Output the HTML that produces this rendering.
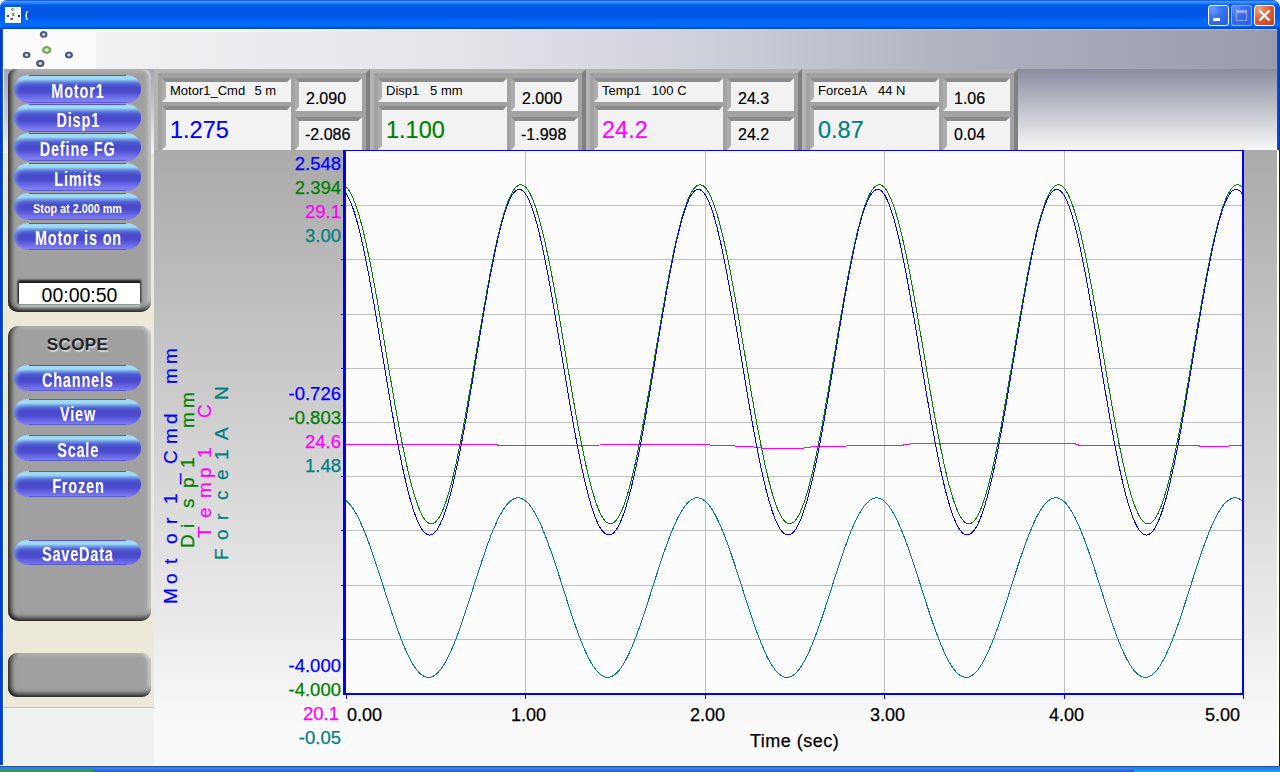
<!DOCTYPE html>
<html><head><meta charset="utf-8">
<style>
*{margin:0;padding:0;box-sizing:border-box}
html,body{width:1280px;height:772px;overflow:hidden;background:#fff;font-family:"Liberation Sans",sans-serif}
.a{position:absolute}
#title{left:0;top:0;width:1280px;height:29px;border-radius:7px 7px 0 0;
 background:linear-gradient(#0a4ed6 0px,#3d95ff 1.5px,#2c82fa 3px,#0060ee 5px,#0055e5 9px,#0057e8 17px,#0066f6 20px,#006cf8 26px,#0054dc 27.5px,#0040c4 29px)}
#lb{left:0;top:29px;width:3px;height:741px;background:linear-gradient(90deg,#0030b8,#0a5ae8)}
#rb{left:1277px;top:29px;width:3px;height:741px;background:linear-gradient(90deg,#0a5ae8,#0030b8)}
#bb{left:0;top:765px;width:1280px;height:5px;background:linear-gradient(#ffffff 0,#ffffff 1px,#2050a0 1px,#2050a0 2px,#3080e8 2px)}
#tb{left:0;top:770px;width:1280px;height:2px;background:#2a62d4}
#start{left:0;top:770px;width:93px;height:2px;background:#3c9a3c}
.wbtn{top:5px;width:21px;height:21px;border:1px solid #fff;border-radius:3px}
#client{left:3px;top:29px;width:1274px;height:736px;background:#ece9d8;overflow:hidden}
.c{position:absolute}
/* left panel */
.panel{position:absolute;background:#a0a0a0;border-radius:10px;
 box-shadow:inset 6px 0 5px -3px rgba(0,0,0,.75), inset 0 -6px 5px -3px rgba(0,0,0,.8), inset -5px 0 5px -3px rgba(255,255,255,.7), inset 0 5px 4px -3px rgba(255,255,255,.3)}
.btn{position:absolute;left:6px;width:127px;border-radius:15px/14px;
 background:linear-gradient(#8cc8f0 0,#9cd8f2 1px,#a0dcf4 4px,#74a4e6 6px,#5060d4 9px,#4848c8 13px,#4c4cd0 17px,#6a6ae6 22px,#8080f2 26px,#7070e8 28px);
 box-shadow:inset 3px 3px 4px -1px rgba(170,225,250,.45);
 color:#fff;font-weight:bold;font-size:20px;text-align:center;white-space:nowrap;overflow:hidden;padding-top:2px}
.btn:before{content:"";position:absolute;left:15px;right:15px;top:0;height:1px;background:#5454d4}
.btn:after{content:"";position:absolute;left:15px;right:15px;bottom:0;height:1px;background:#5a5ad0}
.btn span{display:inline-block;letter-spacing:1.2px;margin-right:-1.2px;transform:scaleX(.72);transform-origin:center}
/* stats */
.sp{position:absolute;top:40px;width:216px;height:81px;background:#a2a2a2;border-top:4px solid #b4b4b4;border-left:4px solid #b4b4b4;border-right:4px solid #808080}
.bx{position:absolute;-webkit-text-stroke:.2px currentColor;background:#f2f2f2;border-top:4px solid #8c8c8c;border-left:4px solid #adadad;border-right:4px solid #f2f2f2;border-bottom:4px solid #f2f2f2;white-space:nowrap;color:#000}
.ax{position:absolute;font-size:18.5px;text-align:right;width:80px;line-height:18px;margin-left:1px;margin-top:-0.5px;-webkit-text-stroke:.25px currentColor}
.xl{position:absolute;font-size:18px;line-height:18px;color:#000;-webkit-text-stroke:.25px currentColor}
</style></head><body>
<div id="title" class="a">
 <div class="a" style="left:5px;top:7px;width:16px;height:16px;background:#fff">
  <svg width="16" height="16" style="position:absolute;left:0;top:0">
   <path d="M7.5 1.2 L8.8 2.5 L7.5 3.8 L6.2 2.5 Z" fill="none" stroke="#3a4060" stroke-width="0.9"/>
   <rect x="7.3" y="6" width="2" height="3" fill="#58a030"/>
   <rect x="2" y="8" width="2" height="2" fill="#404868"/>
   <rect x="13" y="8" width="2" height="2" fill="#303860"/>
   <rect x="5.5" y="11" width="2.5" height="1.8" fill="#404868"/>
  </svg>
 </div>
 <div class="a" style="left:25px;top:9px;font-size:9.5px;line-height:12px;font-weight:bold;color:#fff;text-shadow:1px 0 #0a1870">(</div>
 <div class="a wbtn" style="left:1208px;background:radial-gradient(circle at 20% 15%,#6a9cff 0,#3a74f4 40%,#2456e0 100%)"><div class="a" style="left:4px;top:12px;width:7px;height:3px;background:#fff"></div></div>
 <div class="a wbtn" style="left:1231px;border-color:rgba(255,255,255,.45);background:radial-gradient(circle at 20% 15%,#5a8cf8 0,#3a6ef0 40%,#2a5ce6 100%)"><div class="a" style="left:4px;top:4px;width:11px;height:11px;border:1px solid rgba(200,210,255,.6);border-top-width:3px"></div></div>
 <div class="a wbtn" style="left:1254px;background:radial-gradient(circle at 20% 15%,#f0a080 0,#e2603a 45%,#c83c14 100%)">
  <svg width="19" height="19" style="position:absolute;left:0;top:0"><path d="M4.5 4.5 L14.5 14.5 M14.5 4.5 L4.5 14.5" stroke="#fff" stroke-width="2.2"/></svg>
 </div>
</div>
<div id="lb" class="a"></div><div id="rb" class="a"></div><div id="bb" class="a"></div><div id="tb" class="a"></div><div id="start" class="a"></div><div class="a" style="left:1134px;top:770px;width:146px;height:2px;background:#18a0ee"></div><div class="a" style="left:1277px;top:150px;width:2px;height:616px;background:#fffff2"></div><div class="a" style="left:1279px;top:150px;width:1px;height:616px;background:#0010a0"></div>

<div id="client" class="a">
 <!-- left column background -->
 <div class="c" style="left:0;top:0;width:1px;height:736px;background:#fff"></div>
 <div class="c" style="left:1px;top:40px;width:151px;height:84px;background:linear-gradient(#aaa2b6,#d4d0dc 60%,#f4f3f6)"></div>
 <div class="c" style="left:1px;top:678px;width:151px;height:1px;background:#c8c4b0"></div>
 <div class="c" style="left:1px;top:679px;width:151px;height:57px;background:#eff0f0"></div>
 <!-- logo -->
 <div class="c" style="left:0;top:0;width:93px;height:40px;background:#fbfbfb">
  <svg width="93" height="40" style="position:absolute;left:0;top:0">
   <defs>
    <radialGradient id="gd"><stop offset="0" stop-color="#f0f0f4"/><stop offset=".3" stop-color="#c8c8d4"/><stop offset=".55" stop-color="#4e5878"/><stop offset=".85" stop-color="#4e5878"/><stop offset="1" stop-color="#7a84a0"/></radialGradient>
    <radialGradient id="gg"><stop offset="0" stop-color="#f0f4ec"/><stop offset=".35" stop-color="#c8dcc0"/><stop offset=".6" stop-color="#74aa4c"/><stop offset=".88" stop-color="#74aa4c"/><stop offset="1" stop-color="#a0c888"/></radialGradient>
   </defs>
   <ellipse cx="40.7" cy="5.4" rx="3.9" ry="3.4" fill="url(#gd)"/>
   <ellipse cx="23.6" cy="26" rx="4" ry="3.3" fill="url(#gd)"/>
   <ellipse cx="65.9" cy="26" rx="4.1" ry="3.4" fill="url(#gd)"/>
   <ellipse cx="37.3" cy="34.4" rx="4.3" ry="3.6" fill="url(#gd)"/>
   <ellipse cx="43.7" cy="21" rx="4.8" ry="4" fill="url(#gg)"/>
  </svg>
 </div>
 <!-- top strip -->
 <div class="c" style="left:93px;top:0;width:1181px;height:40px;background:linear-gradient(90deg,#f2f2f4 0%,#e4e4ea 30%,#d0d2db 50%,#adb0bd 75%,#999cae 100%)"></div>
 <div class="c" style="left:93px;top:0;width:1181px;height:1px;background:rgba(255,255,255,.3)"></div>
 <div class="c" style="left:93px;top:1px;width:300px;height:2px;background:linear-gradient(90deg,#f8f9fa 0%,#f8f9fa 40%,rgba(248,249,250,0) 100%)"></div>
 <div class="c" style="left:93px;top:0;width:300px;height:1px;background:linear-gradient(90deg,#fff 0%,#fff 40%,rgba(255,255,255,0) 100%)"></div>
 <!-- stats row right bg -->
 <div class="c" style="left:1015px;top:40px;width:259px;height:81px;background:linear-gradient(#8a8ea0,#f8f8fa)"></div>
 <div class="c" style="left:148px;top:40px;width:4px;height:81px;background:linear-gradient(#aaa2b6,#d4d0dc 60%,#f4f3f6)"></div>
 <!-- chart bg -->
 <div class="c" style="left:151px;top:121px;width:1123px;height:615px;background:linear-gradient(#aaaaaa 0%,#d4d4d4 50%,#fafafa 95%)"></div>

 <!-- left panel 1 -->
 <div class="panel" style="left:5px;top:40px;width:143px;height:243px;border-radius:8px 8px 10px 10px">
  <div class="btn" style="top:6px;height:28px;line-height:28px"><span>Motor1</span></div>
  <div class="btn" style="top:35px;height:28px;line-height:28px"><span>Disp1</span></div>
  <div class="btn" style="top:64px;height:28px;line-height:28px"><span>Define FG</span></div>
  <div class="btn" style="top:94px;height:28px;line-height:28px"><span>Limits</span></div>
  <div class="btn" style="top:124px;height:27px;line-height:27px;font-size:13px"><span style="transform:scaleX(.83);letter-spacing:0;margin-right:0">Stop at 2.000 mm</span></div>
  <div class="btn" style="top:154px;height:27px;line-height:27px"><span>Motor is on</span></div>
  <div class="c" style="left:11px;top:214px;width:121px;height:21px;background:#fff;box-shadow:0 -2px 2px 1px #1a1a1a, -1px 0 2px #404040, 0 3px 3px rgba(230,230,230,.7);font-size:19.5px;line-height:21px;text-align:center;color:#000;padding-top:2px">00:00:50</div>
 </div>
 <!-- scope panel -->
 <div class="panel" style="left:5px;top:297px;width:143px;height:295px">
  <div class="c" style="left:0;top:10px;width:139px;line-height:17px;text-align:center;font-weight:bold;font-size:17px;color:#262626;letter-spacing:.4px;text-shadow:1px 1.5px 1px rgba(255,255,255,.55)">SCOPE</div>
  <div class="btn" style="top:39px;height:26px;line-height:26px"><span>Channels</span></div>
  <div class="btn" style="top:73px;height:26px;line-height:26px"><span>View</span></div>
  <div class="btn" style="top:109px;height:26px;line-height:26px"><span>Scale</span></div>
  <div class="btn" style="top:145px;height:26px;line-height:26px"><span>Frozen</span></div>
  <div class="btn" style="top:214px;height:25px;line-height:25px"><span>SaveData</span></div>
 </div>
 <div class="panel" style="left:5px;top:624px;width:143px;height:44px;border-radius:9px"></div>

 <!-- stats panels -->
 <div class="sp" style="left:151px">
  <div class="bx" style="left:4px;top:5px;width:129px;height:24px;font-size:13px;line-height:16px;padding-left:4px;padding-top:1px;-webkit-text-stroke:0">Motor1_Cmd&nbsp;&nbsp;<span style="margin-left:2px">5 m</span></div>
  <div class="bx" style="left:4px;top:33px;width:129px;height:44px;font-size:23.5px;line-height:26px;padding-left:4px;padding-top:7px;color:#0000ff">1.275</div>
  <div class="bx" style="left:137px;top:5px;width:67px;height:33px;font-size:16px;line-height:18px;padding-left:7px;padding-top:8px">2.090</div>
  <div class="bx" style="left:137px;top:44px;width:67px;height:33px;font-size:16px;line-height:18px;padding-left:6px;padding-top:5px">-2.086</div>
 </div>
 <div class="sp" style="left:367px">
  <div class="bx" style="left:4px;top:5px;width:129px;height:24px;font-size:13px;line-height:16px;padding-left:4px;padding-top:1px;-webkit-text-stroke:0">Disp1&nbsp;&nbsp;&nbsp;5 mm</div>
  <div class="bx" style="left:4px;top:33px;width:129px;height:44px;font-size:23.5px;line-height:26px;padding-left:4px;padding-top:7px;color:#008000">1.100</div>
  <div class="bx" style="left:137px;top:5px;width:67px;height:33px;font-size:16px;line-height:18px;padding-left:7px;padding-top:8px">2.000</div>
  <div class="bx" style="left:137px;top:44px;width:67px;height:33px;font-size:16px;line-height:18px;padding-left:6px;padding-top:5px">-1.998</div>
 </div>
 <div class="sp" style="left:583px">
  <div class="bx" style="left:4px;top:5px;width:129px;height:24px;font-size:13px;line-height:16px;padding-left:4px;padding-top:1px;-webkit-text-stroke:0">Temp1&nbsp;&nbsp;&nbsp;100 C</div>
  <div class="bx" style="left:4px;top:33px;width:129px;height:44px;font-size:23.5px;line-height:26px;padding-left:4px;padding-top:7px;color:#ff00ff">24.2</div>
  <div class="bx" style="left:137px;top:5px;width:67px;height:33px;font-size:16px;line-height:18px;padding-left:7px;padding-top:8px">24.3</div>
  <div class="bx" style="left:137px;top:44px;width:67px;height:33px;font-size:16px;line-height:18px;padding-left:7px;padding-top:5px">24.2</div>
 </div>
 <div class="sp" style="left:799px">
  <div class="bx" style="left:4px;top:5px;width:129px;height:24px;font-size:13px;line-height:16px;padding-left:4px;padding-top:1px;-webkit-text-stroke:0">Force1A&nbsp;&nbsp;&nbsp;44 N</div>
  <div class="bx" style="left:4px;top:33px;width:129px;height:44px;font-size:23.5px;line-height:26px;padding-left:4px;padding-top:7px;color:#008080">0.87</div>
  <div class="bx" style="left:137px;top:5px;width:67px;height:33px;font-size:16px;line-height:18px;padding-left:7px;padding-top:8px">1.06</div>
  <div class="bx" style="left:137px;top:44px;width:67px;height:33px;font-size:16px;line-height:18px;padding-left:7px;padding-top:5px">0.04</div>
 </div>
 <!-- chart bg cover for y>=150 over stats -->
 <div class="c" style="left:151px;top:121px;width:1123px;height:615px;background:linear-gradient(#aaaaaa 0%,#d4d4d4 50%,#fafafa 95%)"></div>
</div>

<!-- chart svg in page coords -->
<svg class="a" style="left:0;top:0" width="1280" height="772">
 <rect x="346" y="151" width="896" height="542" fill="#fcfcfc"/>
 <g stroke="#c0c0c0" stroke-width="1" shape-rendering="crispEdges"><line x1="346" y1="205.5" x2="1242" y2="205.5"/><line x1="346" y1="259.5" x2="1242" y2="259.5"/><line x1="346" y1="314.5" x2="1242" y2="314.5"/><line x1="346" y1="368.5" x2="1242" y2="368.5"/><line x1="346" y1="422.5" x2="1242" y2="422.5"/><line x1="346" y1="476.5" x2="1242" y2="476.5"/><line x1="346" y1="530.5" x2="1242" y2="530.5"/><line x1="346" y1="585.5" x2="1242" y2="585.5"/><line x1="346" y1="639.5" x2="1242" y2="639.5"/><line x1="525.5" y1="151" x2="525.5" y2="693"/><line x1="705.5" y1="151" x2="705.5" y2="693"/><line x1="884.5" y1="151" x2="884.5" y2="693"/><line x1="1064.5" y1="151" x2="1064.5" y2="693"/></g>
 <g stroke="#0000ff" stroke-width="1" shape-rendering="crispEdges"><line x1="341" y1="205.5" x2="343" y2="205.5"/><line x1="341" y1="259.5" x2="343" y2="259.5"/><line x1="341" y1="314.5" x2="343" y2="314.5"/><line x1="341" y1="368.5" x2="343" y2="368.5"/><line x1="341" y1="422.5" x2="343" y2="422.5"/><line x1="341" y1="476.5" x2="343" y2="476.5"/><line x1="341" y1="530.5" x2="343" y2="530.5"/><line x1="341" y1="585.5" x2="343" y2="585.5"/><line x1="341" y1="639.5" x2="343" y2="639.5"/><line x1="346.5" y1="695" x2="346.5" y2="699"/><line x1="525.5" y1="695" x2="525.5" y2="699"/><line x1="705.5" y1="695" x2="705.5" y2="699"/><line x1="884.5" y1="695" x2="884.5" y2="699"/><line x1="1064.5" y1="695" x2="1064.5" y2="699"/><line x1="1243.5" y1="695" x2="1243.5" y2="699"/></g>
 <polyline points="346,444.5 497,444.5 497,445.5 540,445.5 560,445.5 640,444.5 700,444.5 720,445.5 750,446.5 765,448.5 800,448.5 815,446.5 880,445.5 900,445.5 914,443.5 1074,443.5 1080,445.5 1199,445.5 1200,446.5 1228,446.5 1230,445.5 1242,445.5" fill="none" stroke="#ff00ff" stroke-width="1" shape-rendering="crispEdges"/>
 <polyline points="346,500.6 347,501.4 348,502.4 349,503.4 350,504.6 351,505.8 352,507.2 353,508.6 354,510.1 355,511.8 356,513.5 357,515.3 358,517.2 359,519.2 360,521.3 361,523.5 362,525.7 363,528.0 364,530.4 365,532.9 366,535.4 367,538.0 368,540.7 369,543.4 370,546.1 371,548.9 372,551.8 373,554.7 374,557.7 375,560.6 376,563.7 377,566.7 378,569.8 379,572.9 380,576.0 381,579.1 382,582.3 383,585.4 384,588.5 385,591.7 386,594.8 387,598.0 388,601.1 389,604.2 390,607.3 391,610.3 392,613.4 393,616.3 394,619.3 395,622.2 396,625.1 397,628.0 398,630.7 399,633.5 400,636.1 401,638.8 402,641.3 403,643.8 404,646.2 405,648.6 406,650.8 407,653.0 408,655.1 409,657.2 410,659.1 411,661.0 412,662.7 413,664.4 414,666.0 415,667.5 416,668.9 417,670.2 418,671.3 419,672.4 420,673.4 421,674.3 422,675.0 423,675.7 424,676.2 425,676.7 426,677.0 427,677.2 428,677.3 429,677.3 430,677.2 431,677.0 432,676.7 433,676.2 434,675.7 435,675.0 436,674.3 437,673.4 438,672.4 439,671.3 440,670.2 441,668.9 442,667.5 443,666.0 444,664.4 445,662.7 446,661.0 447,659.1 448,657.2 449,655.1 450,653.0 451,650.8 452,648.6 453,646.2 454,643.8 455,641.3 456,638.8 457,636.1 458,633.5 459,630.7 460,628.0 461,625.1 462,622.2 463,619.3 464,616.3 465,613.4 466,610.3 467,607.3 468,604.2 469,601.1 470,598.0 471,594.8 472,591.7 473,588.5 474,585.4 475,582.3 476,579.1 477,576.0 478,572.9 479,569.8 480,566.7 481,563.7 482,560.6 483,557.7 484,554.7 485,551.8 486,548.9 487,546.1 488,543.4 489,540.7 490,538.0 491,535.4 492,532.9 493,530.4 494,528.0 495,525.7 496,523.5 497,521.3 498,519.2 499,517.2 500,515.3 501,513.5 502,511.8 503,510.1 504,508.6 505,507.2 506,505.8 507,504.6 508,503.4 509,502.4 510,501.4 511,500.6 512,499.9 513,499.3 514,498.8 515,498.4 516,498.1 517,497.9 518,497.9 519,497.9 520,498.0 521,498.3 522,498.7 523,499.2 524,499.8 525,500.5 526,501.3 527,502.2 528,503.2 529,504.3 530,505.5 531,506.9 532,508.3 533,509.8 534,511.4 535,513.2 536,515.0 537,516.8 538,518.8 539,520.9 540,523.0 541,525.3 542,527.6 543,529.9 544,532.4 545,534.9 546,537.5 547,540.1 548,542.8 549,545.6 550,548.4 551,551.2 552,554.1 553,557.1 554,560.0 555,563.1 556,566.1 557,569.2 558,572.3 559,575.4 560,578.5 561,581.6 562,584.8 563,587.9 564,591.1 565,594.2 566,597.3 567,600.5 568,603.6 569,606.6 570,609.7 571,612.7 572,615.8 573,618.7 574,621.7 575,624.5 576,627.4 577,630.2 578,632.9 579,635.6 580,638.2 581,640.8 582,643.3 583,645.7 584,648.1 585,650.4 586,652.6 587,654.7 588,656.8 589,658.7 590,660.6 591,662.4 592,664.1 593,665.7 594,667.2 595,668.6 596,669.9 597,671.1 598,672.2 599,673.2 600,674.1 601,674.9 602,675.6 603,676.1 604,676.6 605,676.9 606,677.2 607,677.3 608,677.3 609,677.3 610,677.1 611,676.7 612,676.3 613,675.8 614,675.2 615,674.4 616,673.6 617,672.6 618,671.6 619,670.4 620,669.1 621,667.8 622,666.3 623,664.7 624,663.1 625,661.3 626,659.5 627,657.6 628,655.6 629,653.5 630,651.3 631,649.0 632,646.7 633,644.3 634,641.8 635,639.3 636,636.7 637,634.0 638,631.3 639,628.5 640,625.7 641,622.8 642,619.9 643,616.9 644,614.0 645,610.9 646,607.9 647,604.8 648,601.7 649,598.6 650,595.5 651,592.3 652,589.2 653,586.0 654,582.9 655,579.7 656,576.6 657,573.5 658,570.4 659,567.3 660,564.3 661,561.2 662,558.3 663,555.3 664,552.4 665,549.5 666,546.7 667,543.9 668,541.2 669,538.5 670,535.9 671,533.4 672,530.9 673,528.5 674,526.2 675,523.9 676,521.7 677,519.6 678,517.6 679,515.7 680,513.9 681,512.1 682,510.5 683,508.9 684,507.4 685,506.1 686,504.8 687,503.6 688,502.6 689,501.6 690,500.8 691,500.0 692,499.4 693,498.9 694,498.5 695,498.1 696,497.9 697,497.9 698,497.9 699,498.0 700,498.3 701,498.6 702,499.1 703,499.6 704,500.3 705,501.1 706,502.0 707,503.0 708,504.1 709,505.3 710,506.6 711,508.0 712,509.5 713,511.1 714,512.8 715,514.6 716,516.5 717,518.4 718,520.5 719,522.6 720,524.8 721,527.1 722,529.5 723,531.9 724,534.4 725,537.0 726,539.6 727,542.3 728,545.0 729,547.8 730,550.7 731,553.5 732,556.5 733,559.4 734,562.5 735,565.5 736,568.6 737,571.6 738,574.7 739,577.9 740,581.0 741,584.1 742,587.3 743,590.4 744,593.6 745,596.7 746,599.8 747,602.9 748,606.0 749,609.1 750,612.1 751,615.2 752,618.1 753,621.1 754,624.0 755,626.8 756,629.6 757,632.4 758,635.1 759,637.7 760,640.3 761,642.8 762,645.3 763,647.6 764,649.9 765,652.2 766,654.3 767,656.4 768,658.4 769,660.2 770,662.0 771,663.8 772,665.4 773,666.9 774,668.3 775,669.7 776,670.9 777,672.0 778,673.0 779,673.9 780,674.7 781,675.4 782,676.0 783,676.5 784,676.9 785,677.2 786,677.3 787,677.3 788,677.3 789,677.1 790,676.8 791,676.4 792,675.9 793,675.3 794,674.6 795,673.8 796,672.8 797,671.8 798,670.6 799,669.4 800,668.0 801,666.6 802,665.1 803,663.4 804,661.7 805,659.9 806,658.0 807,656.0 808,653.9 809,651.7 810,649.5 811,647.2 812,644.8 813,642.3 814,639.8 815,637.2 816,634.5 817,631.8 818,629.1 819,626.3 820,623.4 821,620.5 822,617.5 823,614.6 824,611.5 825,608.5 826,605.4 827,602.3 828,599.2 829,596.1 830,592.9 831,589.8 832,586.7 833,583.5 834,580.4 835,577.2 836,574.1 837,571.0 838,567.9 839,564.9 840,561.8 841,558.9 842,555.9 843,553.0 844,550.1 845,547.2 846,544.5 847,541.7 848,539.1 849,536.4 850,533.9 851,531.4 852,529.0 853,526.6 854,524.4 855,522.2 856,520.1 857,518.0 858,516.1 859,514.2 860,512.5 861,510.8 862,509.2 863,507.7 864,506.3 865,505.0 866,503.9 867,502.8 868,501.8 869,500.9 870,500.2 871,499.5 872,499.0 873,498.5 874,498.2 875,498.0 876,497.9 877,497.9 878,498.0 879,498.2 880,498.5 881,499.0 882,499.5 883,500.2 884,500.9 885,501.8 886,502.8 887,503.9 888,505.0 889,506.3 890,507.7 891,509.2 892,510.8 893,512.5 894,514.2 895,516.1 896,518.0 897,520.1 898,522.2 899,524.4 900,526.6 901,529.0 902,531.4 903,533.9 904,536.4 905,539.1 906,541.7 907,544.5 908,547.2 909,550.1 910,553.0 911,555.9 912,558.9 913,561.8 914,564.9 915,567.9 916,571.0 917,574.1 918,577.2 919,580.4 920,583.5 921,586.7 922,589.8 923,592.9 924,596.1 925,599.2 926,602.3 927,605.4 928,608.5 929,611.5 930,614.6 931,617.5 932,620.5 933,623.4 934,626.3 935,629.1 936,631.8 937,634.5 938,637.2 939,639.8 940,642.3 941,644.8 942,647.2 943,649.5 944,651.7 945,653.9 946,656.0 947,658.0 948,659.9 949,661.7 950,663.4 951,665.1 952,666.6 953,668.0 954,669.4 955,670.6 956,671.8 957,672.8 958,673.8 959,674.6 960,675.3 961,675.9 962,676.4 963,676.8 964,677.1 965,677.3 966,677.3 967,677.3 968,677.2 969,676.9 970,676.5 971,676.0 972,675.4 973,674.7 974,673.9 975,673.0 976,672.0 977,670.9 978,669.7 979,668.3 980,666.9 981,665.4 982,663.8 983,662.0 984,660.2 985,658.4 986,656.4 987,654.3 988,652.2 989,649.9 990,647.6 991,645.3 992,642.8 993,640.3 994,637.7 995,635.1 996,632.4 997,629.6 998,626.8 999,624.0 1000,621.1 1001,618.1 1002,615.2 1003,612.1 1004,609.1 1005,606.0 1006,602.9 1007,599.8 1008,596.7 1009,593.6 1010,590.4 1011,587.3 1012,584.1 1013,581.0 1014,577.9 1015,574.7 1016,571.6 1017,568.6 1018,565.5 1019,562.5 1020,559.4 1021,556.5 1022,553.5 1023,550.7 1024,547.8 1025,545.0 1026,542.3 1027,539.6 1028,537.0 1029,534.4 1030,531.9 1031,529.5 1032,527.1 1033,524.8 1034,522.6 1035,520.5 1036,518.4 1037,516.5 1038,514.6 1039,512.8 1040,511.1 1041,509.5 1042,508.0 1043,506.6 1044,505.3 1045,504.1 1046,503.0 1047,502.0 1048,501.1 1049,500.3 1050,499.6 1051,499.1 1052,498.6 1053,498.3 1054,498.0 1055,497.9 1056,497.9 1057,497.9 1058,498.1 1059,498.5 1060,498.9 1061,499.4 1062,500.0 1063,500.8 1064,501.6 1065,502.6 1066,503.6 1067,504.8 1068,506.1 1069,507.4 1070,508.9 1071,510.5 1072,512.1 1073,513.9 1074,515.7 1075,517.6 1076,519.6 1077,521.7 1078,523.9 1079,526.2 1080,528.5 1081,530.9 1082,533.4 1083,535.9 1084,538.5 1085,541.2 1086,543.9 1087,546.7 1088,549.5 1089,552.4 1090,555.3 1091,558.3 1092,561.2 1093,564.3 1094,567.3 1095,570.4 1096,573.5 1097,576.6 1098,579.7 1099,582.9 1100,586.0 1101,589.2 1102,592.3 1103,595.5 1104,598.6 1105,601.7 1106,604.8 1107,607.9 1108,610.9 1109,614.0 1110,616.9 1111,619.9 1112,622.8 1113,625.7 1114,628.5 1115,631.3 1116,634.0 1117,636.7 1118,639.3 1119,641.8 1120,644.3 1121,646.7 1122,649.0 1123,651.3 1124,653.5 1125,655.6 1126,657.6 1127,659.5 1128,661.3 1129,663.1 1130,664.7 1131,666.3 1132,667.8 1133,669.1 1134,670.4 1135,671.6 1136,672.6 1137,673.6 1138,674.4 1139,675.2 1140,675.8 1141,676.3 1142,676.7 1143,677.1 1144,677.3 1145,677.3 1146,677.3 1147,677.2 1148,676.9 1149,676.6 1150,676.1 1151,675.6 1152,674.9 1153,674.1 1154,673.2 1155,672.2 1156,671.1 1157,669.9 1158,668.6 1159,667.2 1160,665.7 1161,664.1 1162,662.4 1163,660.6 1164,658.7 1165,656.8 1166,654.7 1167,652.6 1168,650.4 1169,648.1 1170,645.7 1171,643.3 1172,640.8 1173,638.2 1174,635.6 1175,632.9 1176,630.2 1177,627.4 1178,624.5 1179,621.7 1180,618.7 1181,615.8 1182,612.7 1183,609.7 1184,606.6 1185,603.6 1186,600.5 1187,597.3 1188,594.2 1189,591.1 1190,587.9 1191,584.8 1192,581.6 1193,578.5 1194,575.4 1195,572.3 1196,569.2 1197,566.1 1198,563.1 1199,560.0 1200,557.1 1201,554.1 1202,551.2 1203,548.4 1204,545.6 1205,542.8 1206,540.1 1207,537.5 1208,534.9 1209,532.4 1210,529.9 1211,527.6 1212,525.3 1213,523.0 1214,520.9 1215,518.8 1216,516.8 1217,515.0 1218,513.2 1219,511.4 1220,509.8 1221,508.3 1222,506.9 1223,505.5 1224,504.3 1225,503.2 1226,502.2 1227,501.3 1228,500.5 1229,499.8 1230,499.2 1231,498.7 1232,498.3 1233,498.0 1234,497.9 1235,497.9 1236,497.9 1237,498.1 1238,498.4 1239,498.8 1240,499.3 1241,499.9 1242,500.6" fill="none" stroke="#008080" stroke-width="1" shape-rendering="crispEdges"/>
 <polyline points="346,186.8 347,187.8 348,189.0 349,190.5 350,192.1 351,193.9 352,195.9 353,198.2 354,200.6 355,203.2 356,205.9 357,208.9 358,212.1 359,215.4 360,218.9 361,222.5 362,226.3 363,230.3 364,234.4 365,238.7 366,243.1 367,247.7 368,252.4 369,257.2 370,262.1 371,267.2 372,272.3 373,277.6 374,282.9 375,288.3 376,293.9 377,299.4 378,305.1 379,310.8 380,316.6 381,322.4 382,328.3 383,334.1 384,340.1 385,346.0 386,351.9 387,357.9 388,363.8 389,369.7 390,375.6 391,381.5 392,387.4 393,393.2 394,398.9 395,404.6 396,410.3 397,415.9 398,421.4 399,426.8 400,432.1 401,437.3 402,442.5 403,447.5 404,452.4 405,457.2 406,461.8 407,466.4 408,470.7 409,475.0 410,479.1 411,483.0 412,486.8 413,490.4 414,493.9 415,497.2 416,500.3 417,503.2 418,506.0 419,508.5 420,510.9 421,513.1 422,515.1 423,516.8 424,518.4 425,519.8 426,521.0 427,522.0 428,522.7 429,523.3 430,523.6 431,523.8 432,523.7 433,523.5 434,523.0 435,522.3 436,521.4 437,520.3 438,519.0 439,517.5 440,515.8 441,513.9 442,511.8 443,509.5 444,507.0 445,504.3 446,501.5 447,498.4 448,495.2 449,491.8 450,488.3 451,484.6 452,480.7 453,476.6 454,472.5 455,468.1 456,463.7 457,459.0 458,454.3 459,449.5 460,444.5 461,439.4 462,434.2 463,428.9 464,423.5 465,418.1 466,412.5 467,406.9 468,401.2 469,395.5 470,389.7 471,383.9 472,378.0 473,372.1 474,366.2 475,360.2 476,354.3 477,348.4 478,342.4 479,336.5 480,330.6 481,324.7 482,318.9 483,313.1 484,307.4 485,301.7 486,296.1 487,290.5 488,285.1 489,279.7 490,274.4 491,269.2 492,264.1 493,259.1 494,254.3 495,249.6 496,244.9 497,240.5 498,236.1 499,232.0 500,227.9 501,224.0 502,220.3 503,216.8 504,213.4 505,210.2 506,207.1 507,204.3 508,201.6 509,199.1 510,196.8 511,194.7 512,192.8 513,191.1 514,189.6 515,188.3 516,187.2 517,186.3 518,185.6 519,185.1 520,184.9 521,184.8 522,185.0 523,185.3 524,185.9 525,186.6 526,187.6 527,188.8 528,190.2 529,191.8 530,193.5 531,195.5 532,197.7 533,200.1 534,202.6 535,205.4 536,208.3 537,211.4 538,214.7 539,218.2 540,221.8 541,225.6 542,229.5 543,233.6 544,237.9 545,242.2 546,246.8 547,251.4 548,256.2 549,261.1 550,266.1 551,271.3 552,276.5 553,281.8 554,287.2 555,292.7 556,298.3 557,304.0 558,309.7 559,315.4 560,321.2 561,327.1 562,333.0 563,338.9 564,344.8 565,350.7 566,356.7 567,362.6 568,368.5 569,374.5 570,380.3 571,386.2 572,392.0 573,397.8 574,403.5 575,409.2 576,414.7 577,420.3 578,425.7 579,431.0 580,436.3 581,441.4 582,446.5 583,451.4 584,456.2 585,460.9 586,465.5 587,469.9 588,474.2 589,478.3 590,482.3 591,486.1 592,489.7 593,493.2 594,496.5 595,499.7 596,502.7 597,505.4 598,508.0 599,510.4 600,512.7 601,514.7 602,516.5 603,518.1 604,519.6 605,520.8 606,521.8 607,522.6 608,523.2 609,523.6 610,523.8 611,523.8 612,523.5 613,523.1 614,522.5 615,521.6 616,520.5 617,519.3 618,517.8 619,516.2 620,514.3 621,512.2 622,510.0 623,507.5 624,504.9 625,502.1 626,499.1 627,495.9 628,492.5 629,489.0 630,485.3 631,481.5 632,477.5 633,473.3 634,469.0 635,464.6 636,460.0 637,455.3 638,450.4 639,445.5 640,440.4 641,435.2 642,430.0 643,424.6 644,419.2 645,413.6 646,408.0 647,402.4 648,396.6 649,390.9 650,385.0 651,379.2 652,373.3 653,367.4 654,361.4 655,355.5 656,349.5 657,343.6 658,337.7 659,331.8 660,325.9 661,320.1 662,314.3 663,308.5 664,302.8 665,297.2 666,291.6 667,286.2 668,280.8 669,275.4 670,270.2 671,265.1 672,260.1 673,255.2 674,250.5 675,245.9 676,241.4 677,237.0 678,232.8 679,228.7 680,224.8 681,221.0 682,217.5 683,214.0 684,210.8 685,207.7 686,204.8 687,202.1 688,199.6 689,197.3 690,195.1 691,193.2 692,191.4 693,189.9 694,188.5 695,187.4 696,186.5 697,185.7 698,185.2 699,184.9 700,184.8 701,184.9 702,185.2 703,185.7 704,186.5 705,187.4 706,188.5 707,189.9 708,191.4 709,193.2 710,195.1 711,197.3 712,199.6 713,202.1 714,204.8 715,207.7 716,210.8 717,214.0 718,217.5 719,221.0 720,224.8 721,228.7 722,232.8 723,237.0 724,241.4 725,245.9 726,250.5 727,255.2 728,260.1 729,265.1 730,270.2 731,275.4 732,280.8 733,286.2 734,291.6 735,297.2 736,302.8 737,308.5 738,314.3 739,320.1 740,325.9 741,331.8 742,337.7 743,343.6 744,349.5 745,355.5 746,361.4 747,367.4 748,373.3 749,379.2 750,385.0 751,390.9 752,396.6 753,402.4 754,408.0 755,413.6 756,419.2 757,424.6 758,430.0 759,435.2 760,440.4 761,445.5 762,450.4 763,455.3 764,460.0 765,464.6 766,469.0 767,473.3 768,477.5 769,481.5 770,485.3 771,489.0 772,492.5 773,495.9 774,499.1 775,502.1 776,504.9 777,507.5 778,510.0 779,512.2 780,514.3 781,516.2 782,517.8 783,519.3 784,520.5 785,521.6 786,522.5 787,523.1 788,523.5 789,523.8 790,523.8 791,523.6 792,523.2 793,522.6 794,521.8 795,520.8 796,519.6 797,518.1 798,516.5 799,514.7 800,512.7 801,510.4 802,508.0 803,505.4 804,502.7 805,499.7 806,496.5 807,493.2 808,489.7 809,486.1 810,482.3 811,478.3 812,474.2 813,469.9 814,465.5 815,460.9 816,456.2 817,451.4 818,446.5 819,441.4 820,436.3 821,431.0 822,425.7 823,420.3 824,414.7 825,409.2 826,403.5 827,397.8 828,392.0 829,386.2 830,380.3 831,374.5 832,368.5 833,362.6 834,356.7 835,350.7 836,344.8 837,338.9 838,333.0 839,327.1 840,321.2 841,315.4 842,309.7 843,304.0 844,298.3 845,292.7 846,287.2 847,281.8 848,276.5 849,271.3 850,266.1 851,261.1 852,256.2 853,251.4 854,246.8 855,242.2 856,237.9 857,233.6 858,229.5 859,225.6 860,221.8 861,218.2 862,214.7 863,211.4 864,208.3 865,205.4 866,202.6 867,200.1 868,197.7 869,195.5 870,193.5 871,191.8 872,190.2 873,188.8 874,187.6 875,186.6 876,185.9 877,185.3 878,185.0 879,184.8 880,184.9 881,185.1 882,185.6 883,186.3 884,187.2 885,188.3 886,189.6 887,191.1 888,192.8 889,194.7 890,196.8 891,199.1 892,201.6 893,204.3 894,207.1 895,210.2 896,213.4 897,216.8 898,220.3 899,224.0 900,227.9 901,232.0 902,236.1 903,240.5 904,244.9 905,249.6 906,254.3 907,259.1 908,264.1 909,269.2 910,274.4 911,279.7 912,285.1 913,290.5 914,296.1 915,301.7 916,307.4 917,313.1 918,318.9 919,324.7 920,330.6 921,336.5 922,342.4 923,348.4 924,354.3 925,360.2 926,366.2 927,372.1 928,378.0 929,383.9 930,389.7 931,395.5 932,401.2 933,406.9 934,412.5 935,418.1 936,423.5 937,428.9 938,434.2 939,439.4 940,444.5 941,449.5 942,454.3 943,459.0 944,463.7 945,468.1 946,472.5 947,476.6 948,480.7 949,484.6 950,488.3 951,491.8 952,495.2 953,498.4 954,501.5 955,504.3 956,507.0 957,509.5 958,511.8 959,513.9 960,515.8 961,517.5 962,519.0 963,520.3 964,521.4 965,522.3 966,523.0 967,523.5 968,523.7 969,523.8 970,523.6 971,523.3 972,522.7 973,522.0 974,521.0 975,519.8 976,518.4 977,516.8 978,515.1 979,513.1 980,510.9 981,508.5 982,506.0 983,503.2 984,500.3 985,497.2 986,493.9 987,490.4 988,486.8 989,483.0 990,479.1 991,475.0 992,470.7 993,466.4 994,461.8 995,457.2 996,452.4 997,447.5 998,442.5 999,437.3 1000,432.1 1001,426.8 1002,421.4 1003,415.9 1004,410.3 1005,404.6 1006,398.9 1007,393.2 1008,387.4 1009,381.5 1010,375.6 1011,369.7 1012,363.8 1013,357.9 1014,351.9 1015,346.0 1016,340.1 1017,334.1 1018,328.3 1019,322.4 1020,316.6 1021,310.8 1022,305.1 1023,299.4 1024,293.9 1025,288.3 1026,282.9 1027,277.6 1028,272.3 1029,267.2 1030,262.1 1031,257.2 1032,252.4 1033,247.7 1034,243.1 1035,238.7 1036,234.4 1037,230.3 1038,226.3 1039,222.5 1040,218.9 1041,215.4 1042,212.1 1043,208.9 1044,205.9 1045,203.2 1046,200.6 1047,198.2 1048,195.9 1049,193.9 1050,192.1 1051,190.5 1052,189.0 1053,187.8 1054,186.8 1055,186.0 1056,185.4 1057,185.0 1058,184.8 1059,184.8 1060,185.1 1061,185.5 1062,186.1 1063,187.0 1064,188.1 1065,189.3 1066,190.8 1067,192.4 1068,194.3 1069,196.4 1070,198.6 1071,201.1 1072,203.7 1073,206.5 1074,209.5 1075,212.7 1076,216.1 1077,219.6 1078,223.3 1079,227.1 1080,231.1 1081,235.3 1082,239.6 1083,244.0 1084,248.6 1085,253.3 1086,258.2 1087,263.1 1088,268.2 1089,273.4 1090,278.6 1091,284.0 1092,289.4 1093,295.0 1094,300.6 1095,306.2 1096,312.0 1097,317.7 1098,323.6 1099,329.4 1100,335.3 1101,341.2 1102,347.2 1103,353.1 1104,359.1 1105,365.0 1106,370.9 1107,376.8 1108,382.7 1109,388.5 1110,394.3 1111,400.1 1112,405.8 1113,411.4 1114,417.0 1115,422.4 1116,427.8 1117,433.2 1118,438.4 1119,443.5 1120,448.5 1121,453.4 1122,458.1 1123,462.7 1124,467.2 1125,471.6 1126,475.8 1127,479.9 1128,483.8 1129,487.6 1130,491.1 1131,494.6 1132,497.8 1133,500.9 1134,503.8 1135,506.5 1136,509.0 1137,511.3 1138,513.5 1139,515.4 1140,517.2 1141,518.7 1142,520.1 1143,521.2 1144,522.1 1145,522.9 1146,523.4 1147,523.7 1148,523.8 1149,523.7 1150,523.4 1151,522.9 1152,522.1 1153,521.2 1154,520.1 1155,518.7 1156,517.2 1157,515.4 1158,513.5 1159,511.3 1160,509.0 1161,506.5 1162,503.8 1163,500.9 1164,497.8 1165,494.6 1166,491.1 1167,487.6 1168,483.8 1169,479.9 1170,475.8 1171,471.6 1172,467.2 1173,462.7 1174,458.1 1175,453.4 1176,448.5 1177,443.5 1178,438.4 1179,433.2 1180,427.8 1181,422.4 1182,417.0 1183,411.4 1184,405.8 1185,400.1 1186,394.3 1187,388.5 1188,382.7 1189,376.8 1190,370.9 1191,365.0 1192,359.1 1193,353.1 1194,347.2 1195,341.2 1196,335.3 1197,329.4 1198,323.6 1199,317.7 1200,312.0 1201,306.2 1202,300.6 1203,295.0 1204,289.4 1205,284.0 1206,278.6 1207,273.4 1208,268.2 1209,263.1 1210,258.2 1211,253.3 1212,248.6 1213,244.0 1214,239.6 1215,235.3 1216,231.1 1217,227.1 1218,223.3 1219,219.6 1220,216.1 1221,212.7 1222,209.5 1223,206.5 1224,203.7 1225,201.1 1226,198.6 1227,196.4 1228,194.3 1229,192.4 1230,190.8 1231,189.3 1232,188.1 1233,187.0 1234,186.1 1235,185.5 1236,185.1 1237,184.8 1238,184.8 1239,185.0 1240,185.4 1241,186.0 1242,186.8" fill="none" stroke="#008000" stroke-width="1" shape-rendering="crispEdges"/>
 <polyline points="346,193.5 347,195.0 348,196.7 349,198.6 350,200.7 351,203.1 352,205.6 353,208.4 354,211.4 355,214.5 356,217.9 357,221.4 358,225.1 359,229.0 360,233.1 361,237.3 362,241.7 363,246.3 364,250.9 365,255.8 366,260.7 367,265.8 368,271.0 369,276.3 370,281.8 371,287.3 372,292.9 373,298.6 374,304.3 375,310.2 376,316.0 377,322.0 378,327.9 379,334.0 380,340.0 381,346.1 382,352.1 383,358.2 384,364.3 385,370.3 386,376.4 387,382.4 388,388.4 389,394.3 390,400.2 391,406.0 392,411.8 393,417.5 394,423.2 395,428.7 396,434.2 397,439.6 398,444.8 399,450.0 400,455.1 401,460.0 402,464.8 403,469.5 404,474.1 405,478.5 406,482.8 407,487.0 408,491.0 409,494.8 410,498.5 411,502.0 412,505.4 413,508.6 414,511.6 415,514.5 416,517.2 417,519.6 418,522.0 419,524.1 420,526.0 421,527.8 422,529.4 423,530.8 424,531.9 425,532.9 426,533.7 427,534.3 428,534.7 429,535.0 430,535.0 431,534.8 432,534.4 433,533.9 434,533.1 435,532.2 436,531.0 437,529.7 438,528.1 439,526.4 440,524.5 441,522.4 442,520.1 443,517.7 444,515.0 445,512.2 446,509.2 447,506.1 448,502.7 449,499.2 450,495.6 451,491.8 452,487.8 453,483.7 454,479.4 455,475.0 456,470.5 457,465.8 458,461.0 459,456.1 460,451.0 461,445.9 462,440.6 463,435.3 464,429.8 465,424.3 466,418.7 467,413.0 468,407.2 469,401.4 470,395.5 471,389.5 472,383.6 473,377.6 474,371.5 475,365.5 476,359.4 477,353.3 478,347.3 479,341.2 480,335.2 481,329.1 482,323.2 483,317.2 484,311.3 485,305.5 486,299.7 487,294.0 488,288.4 489,282.9 490,277.4 491,272.1 492,266.9 493,261.7 494,256.8 495,251.9 496,247.2 497,242.6 498,238.2 499,233.9 500,229.8 501,225.9 502,222.1 503,218.6 504,215.2 505,212.0 506,209.0 507,206.2 508,203.6 509,201.2 510,199.0 511,197.1 512,195.3 513,193.8 514,192.5 515,191.4 516,190.6 517,190.0 518,189.6 519,189.4 520,189.5 521,189.8 522,190.3 523,191.1 524,192.0 525,193.2 526,194.7 527,196.3 528,198.2 529,200.3 530,202.6 531,205.1 532,207.8 533,210.8 534,213.9 535,217.2 536,220.7 537,224.4 538,228.2 539,232.3 540,236.5 541,240.8 542,245.3 543,250.0 544,254.8 545,259.7 546,264.8 547,270.0 548,275.3 549,280.7 550,286.2 551,291.8 552,297.4 553,303.2 554,309.0 555,314.9 556,320.8 557,326.7 558,332.8 559,338.8 560,344.8 561,350.9 562,357.0 563,363.0 564,369.1 565,375.2 566,381.2 567,387.2 568,393.1 569,399.0 570,404.9 571,410.7 572,416.4 573,422.0 574,427.6 575,433.1 576,438.5 577,443.8 578,449.0 579,454.1 580,459.0 581,463.9 582,468.6 583,473.2 584,477.7 585,482.0 586,486.2 587,490.2 588,494.1 589,497.8 590,501.3 591,504.7 592,508.0 593,511.0 594,513.9 595,516.6 596,519.2 597,521.5 598,523.7 599,525.7 600,527.5 601,529.1 602,530.5 603,531.7 604,532.7 605,533.6 606,534.2 607,534.7 608,534.9 609,535.0 610,534.9 611,534.5 612,534.0 613,533.3 614,532.4 615,531.2 616,529.9 617,528.5 618,526.8 619,524.9 620,522.8 621,520.6 622,518.2 623,515.6 624,512.8 625,509.8 626,506.7 627,503.4 628,499.9 629,496.3 630,492.5 631,488.6 632,484.5 633,480.3 634,475.9 635,471.4 636,466.7 637,462.0 638,457.1 639,452.0 640,446.9 641,441.7 642,436.3 643,430.9 644,425.4 645,419.8 646,414.1 647,408.3 648,402.5 649,396.7 650,390.7 651,384.8 652,378.8 653,372.7 654,366.7 655,360.6 656,354.5 657,348.5 658,342.4 659,336.4 660,330.3 661,324.4 662,318.4 663,312.5 664,306.7 665,300.9 666,295.1 667,289.5 668,284.0 669,278.5 670,273.1 671,267.9 672,262.8 673,257.7 674,252.9 675,248.1 676,243.5 677,239.1 678,234.8 679,230.6 680,226.7 681,222.9 682,219.3 683,215.8 684,212.6 685,209.6 686,206.7 687,204.1 688,201.7 689,199.4 690,197.4 691,195.6 692,194.1 693,192.7 694,191.6 695,190.7 696,190.1 697,189.6 698,189.4 699,189.4 700,189.7 701,190.2 702,190.9 703,191.8 704,193.0 705,194.4 706,196.0 707,197.8 708,199.9 709,202.1 710,204.6 711,207.3 712,210.2 713,213.2 714,216.5 715,220.0 716,223.6 717,227.4 718,231.4 719,235.6 720,239.9 721,244.4 722,249.1 723,253.8 724,258.7 725,263.8 726,268.9 727,274.2 728,279.6 729,285.1 730,290.6 731,296.3 732,302.0 733,307.8 734,313.7 735,319.6 736,325.6 737,331.5 738,337.6 739,343.6 740,349.7 741,355.8 742,361.8 743,367.9 744,373.9 745,380.0 746,386.0 747,391.9 748,397.8 749,403.7 750,409.5 751,415.2 752,420.9 753,426.5 754,432.0 755,437.4 756,442.7 757,448.0 758,453.1 759,458.1 760,462.9 761,467.7 762,472.3 763,476.8 764,481.1 765,485.3 766,489.4 767,493.3 768,497.1 769,500.7 770,504.1 771,507.3 772,510.4 773,513.4 774,516.1 775,518.7 776,521.1 777,523.3 778,525.3 779,527.1 780,528.8 781,530.2 782,531.5 783,532.6 784,533.4 785,534.1 786,534.6 787,534.9 788,535.0 789,534.9 790,534.6 791,534.1 792,533.4 793,532.6 794,531.5 795,530.2 796,528.8 797,527.1 798,525.3 799,523.3 800,521.1 801,518.7 802,516.1 803,513.4 804,510.4 805,507.3 806,504.1 807,500.7 808,497.1 809,493.3 810,489.4 811,485.3 812,481.1 813,476.8 814,472.3 815,467.7 816,462.9 817,458.1 818,453.1 819,448.0 820,442.7 821,437.4 822,432.0 823,426.5 824,420.9 825,415.2 826,409.5 827,403.7 828,397.8 829,391.9 830,386.0 831,380.0 832,373.9 833,367.9 834,361.8 835,355.8 836,349.7 837,343.6 838,337.6 839,331.5 840,325.6 841,319.6 842,313.7 843,307.8 844,302.0 845,296.3 846,290.6 847,285.1 848,279.6 849,274.2 850,268.9 851,263.8 852,258.7 853,253.8 854,249.1 855,244.4 856,239.9 857,235.6 858,231.4 859,227.4 860,223.6 861,220.0 862,216.5 863,213.2 864,210.2 865,207.3 866,204.6 867,202.1 868,199.9 869,197.8 870,196.0 871,194.4 872,193.0 873,191.8 874,190.9 875,190.2 876,189.7 877,189.4 878,189.4 879,189.6 880,190.1 881,190.7 882,191.6 883,192.7 884,194.1 885,195.6 886,197.4 887,199.4 888,201.7 889,204.1 890,206.7 891,209.6 892,212.6 893,215.8 894,219.3 895,222.9 896,226.7 897,230.6 898,234.8 899,239.1 900,243.5 901,248.1 902,252.9 903,257.7 904,262.8 905,267.9 906,273.1 907,278.5 908,284.0 909,289.5 910,295.1 911,300.9 912,306.7 913,312.5 914,318.4 915,324.4 916,330.3 917,336.4 918,342.4 919,348.5 920,354.5 921,360.6 922,366.7 923,372.7 924,378.8 925,384.8 926,390.7 927,396.7 928,402.5 929,408.3 930,414.1 931,419.8 932,425.4 933,430.9 934,436.3 935,441.7 936,446.9 937,452.0 938,457.1 939,462.0 940,466.7 941,471.4 942,475.9 943,480.3 944,484.5 945,488.6 946,492.5 947,496.3 948,499.9 949,503.4 950,506.7 951,509.8 952,512.8 953,515.6 954,518.2 955,520.6 956,522.8 957,524.9 958,526.8 959,528.5 960,529.9 961,531.2 962,532.4 963,533.3 964,534.0 965,534.5 966,534.9 967,535.0 968,534.9 969,534.7 970,534.2 971,533.6 972,532.7 973,531.7 974,530.5 975,529.1 976,527.5 977,525.7 978,523.7 979,521.5 980,519.2 981,516.6 982,513.9 983,511.0 984,508.0 985,504.7 986,501.3 987,497.8 988,494.1 989,490.2 990,486.2 991,482.0 992,477.7 993,473.2 994,468.6 995,463.9 996,459.0 997,454.1 998,449.0 999,443.8 1000,438.5 1001,433.1 1002,427.6 1003,422.0 1004,416.4 1005,410.7 1006,404.9 1007,399.0 1008,393.1 1009,387.2 1010,381.2 1011,375.2 1012,369.1 1013,363.0 1014,357.0 1015,350.9 1016,344.8 1017,338.8 1018,332.8 1019,326.7 1020,320.8 1021,314.9 1022,309.0 1023,303.2 1024,297.4 1025,291.8 1026,286.2 1027,280.7 1028,275.3 1029,270.0 1030,264.8 1031,259.7 1032,254.8 1033,250.0 1034,245.3 1035,240.8 1036,236.5 1037,232.3 1038,228.2 1039,224.4 1040,220.7 1041,217.2 1042,213.9 1043,210.8 1044,207.8 1045,205.1 1046,202.6 1047,200.3 1048,198.2 1049,196.3 1050,194.7 1051,193.2 1052,192.0 1053,191.1 1054,190.3 1055,189.8 1056,189.5 1057,189.4 1058,189.6 1059,190.0 1060,190.6 1061,191.4 1062,192.5 1063,193.8 1064,195.3 1065,197.1 1066,199.0 1067,201.2 1068,203.6 1069,206.2 1070,209.0 1071,212.0 1072,215.2 1073,218.6 1074,222.1 1075,225.9 1076,229.8 1077,233.9 1078,238.2 1079,242.6 1080,247.2 1081,251.9 1082,256.8 1083,261.7 1084,266.9 1085,272.1 1086,277.4 1087,282.9 1088,288.4 1089,294.0 1090,299.7 1091,305.5 1092,311.3 1093,317.2 1094,323.2 1095,329.1 1096,335.2 1097,341.2 1098,347.3 1099,353.3 1100,359.4 1101,365.5 1102,371.5 1103,377.6 1104,383.6 1105,389.5 1106,395.5 1107,401.4 1108,407.2 1109,413.0 1110,418.7 1111,424.3 1112,429.8 1113,435.3 1114,440.6 1115,445.9 1116,451.0 1117,456.1 1118,461.0 1119,465.8 1120,470.5 1121,475.0 1122,479.4 1123,483.7 1124,487.8 1125,491.8 1126,495.6 1127,499.2 1128,502.7 1129,506.1 1130,509.2 1131,512.2 1132,515.0 1133,517.7 1134,520.1 1135,522.4 1136,524.5 1137,526.4 1138,528.1 1139,529.7 1140,531.0 1141,532.2 1142,533.1 1143,533.9 1144,534.4 1145,534.8 1146,535.0 1147,535.0 1148,534.7 1149,534.3 1150,533.7 1151,532.9 1152,531.9 1153,530.8 1154,529.4 1155,527.8 1156,526.0 1157,524.1 1158,522.0 1159,519.6 1160,517.2 1161,514.5 1162,511.6 1163,508.6 1164,505.4 1165,502.0 1166,498.5 1167,494.8 1168,491.0 1169,487.0 1170,482.8 1171,478.5 1172,474.1 1173,469.5 1174,464.8 1175,460.0 1176,455.1 1177,450.0 1178,444.8 1179,439.6 1180,434.2 1181,428.7 1182,423.2 1183,417.5 1184,411.8 1185,406.0 1186,400.2 1187,394.3 1188,388.4 1189,382.4 1190,376.4 1191,370.3 1192,364.3 1193,358.2 1194,352.1 1195,346.1 1196,340.0 1197,334.0 1198,327.9 1199,322.0 1200,316.0 1201,310.2 1202,304.3 1203,298.6 1204,292.9 1205,287.3 1206,281.8 1207,276.3 1208,271.0 1209,265.8 1210,260.7 1211,255.8 1212,250.9 1213,246.3 1214,241.7 1215,237.3 1216,233.1 1217,229.0 1218,225.1 1219,221.4 1220,217.9 1221,214.5 1222,211.4 1223,208.4 1224,205.6 1225,203.1 1226,200.7 1227,198.6 1228,196.7 1229,195.0 1230,193.5 1231,192.3 1232,191.2 1233,190.4 1234,189.9 1235,189.5 1236,189.4 1237,189.5 1238,189.9 1239,190.4 1240,191.2 1241,192.3 1242,193.5" fill="none" stroke="#0000ff" stroke-width="1" shape-rendering="crispEdges"/>
 <rect x="343" y="150" width="901" height="1" fill="#0000ff"/>
 <rect x="343" y="150" width="3" height="545" fill="#0000ff"/>
 <rect x="1242" y="150" width="2" height="545" fill="#0000ff"/>
 <rect x="343" y="693" width="901" height="2" fill="#0000ff"/>
</svg>

<!-- y axis labels -->
<div class="ax" style="left:260px;top:155px;color:#0000ff">2.548</div>
<div class="ax" style="left:260px;top:179px;color:#008000">2.394</div>
<div class="ax" style="left:260px;top:203px;color:#ff00ff">29.1</div>
<div class="ax" style="left:260px;top:227px;color:#008080">3.00</div>
<div class="ax" style="left:260px;top:385px;color:#0000ff">-0.726</div>
<div class="ax" style="left:260px;top:409px;color:#008000">-0.803</div>
<div class="ax" style="left:260px;top:433px;color:#ff00ff">24.6</div>
<div class="ax" style="left:260px;top:457px;color:#008080">1.48</div>
<div class="ax" style="left:260px;top:657px;color:#0000ff">-4.000</div>
<div class="ax" style="left:260px;top:681px;color:#008000">-4.000</div>
<div class="ax" style="left:258px;top:705px;color:#ff00ff">20.1</div>
<div class="ax" style="left:260px;top:729px;color:#008080">-0.05</div>
<!-- x labels -->
<div class="xl" style="left:347px;top:706px">0.00</div>
<div class="xl" style="left:511px;top:706px">1.00</div>
<div class="xl" style="left:690px;top:706px">2.00</div>
<div class="xl" style="left:870px;top:706px">3.00</div>
<div class="xl" style="left:1049px;top:706px">4.00</div>
<div class="xl" style="left:1205px;top:706px">5.00</div>
<div class="xl" style="left:750px;top:732px;letter-spacing:.5px">Time (sec)</div>
<!-- rotated axis titles -->
<div class="a" style="left:161.42px;top:604.4px;width:300px;height:19px;transform:rotate(-90deg);transform-origin:0 0;font-size:19px;line-height:19px;color:#0000ff;white-space:nowrap;-webkit-text-stroke:.25px currentColor"><span style="position:absolute;left:0px;top:0">M</span><span style="position:absolute;left:20px;top:0">o</span><span style="position:absolute;left:40px;top:0">t</span><span style="position:absolute;left:60px;top:0">o</span><span style="position:absolute;left:80px;top:0">r</span><span style="position:absolute;left:100px;top:0">1</span><span style="position:absolute;left:120px;top:0">_</span><span style="position:absolute;left:140px;top:0">C</span><span style="position:absolute;left:160px;top:0">m</span><span style="position:absolute;left:180px;top:0">d</span><span style="position:absolute;left:220px;top:0">m</span><span style="position:absolute;left:240px;top:0">m</span></div><div class="a" style="left:178.42px;top:548.3px;width:300px;height:19px;transform:rotate(-90deg);transform-origin:0 0;font-size:19px;line-height:19px;color:#008000;white-space:nowrap;-webkit-text-stroke:.25px currentColor"><span style="position:absolute;left:0px;top:0">D</span><span style="position:absolute;left:20px;top:0">i</span><span style="position:absolute;left:40px;top:0">s</span><span style="position:absolute;left:60px;top:0">p</span><span style="position:absolute;left:80px;top:0">1</span><span style="position:absolute;left:120px;top:0">m</span><span style="position:absolute;left:140px;top:0">m</span></div><div class="a" style="left:194.92px;top:537.5px;width:300px;height:19px;transform:rotate(-90deg);transform-origin:0 0;font-size:19px;line-height:19px;color:#ff00ff;white-space:nowrap;-webkit-text-stroke:.25px currentColor"><span style="position:absolute;left:0px;top:0">T</span><span style="position:absolute;left:20px;top:0">e</span><span style="position:absolute;left:40px;top:0">m</span><span style="position:absolute;left:60px;top:0">p</span><span style="position:absolute;left:80px;top:0">1</span><span style="position:absolute;left:120px;top:0">C</span></div><div class="a" style="left:212.42px;top:559.6px;width:300px;height:19px;transform:rotate(-90deg);transform-origin:0 0;font-size:19px;line-height:19px;color:#008080;white-space:nowrap;-webkit-text-stroke:.25px currentColor"><span style="position:absolute;left:0px;top:0">F</span><span style="position:absolute;left:20px;top:0">o</span><span style="position:absolute;left:40px;top:0">r</span><span style="position:absolute;left:60px;top:0">c</span><span style="position:absolute;left:80px;top:0">e</span><span style="position:absolute;left:100px;top:0">1</span><span style="position:absolute;left:120px;top:0">A</span><span style="position:absolute;left:160px;top:0">N</span></div>
</body></html>
